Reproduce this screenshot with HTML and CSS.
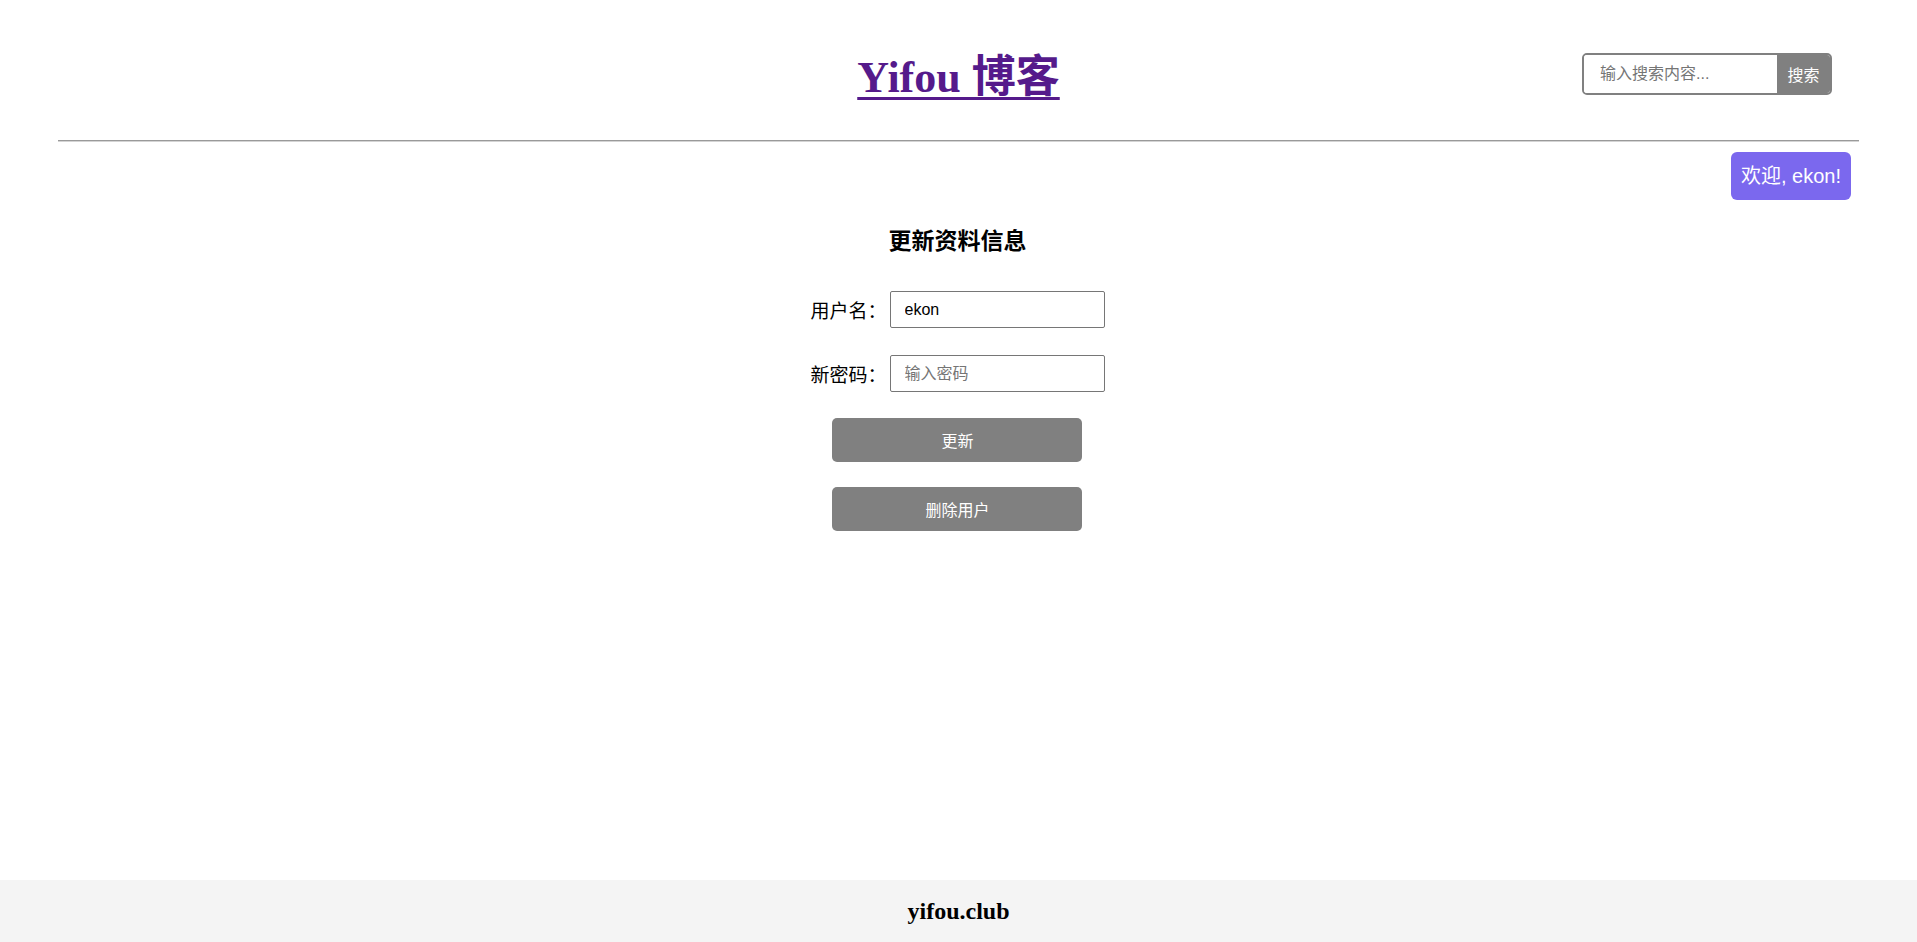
FILE: index.html
```html
<!DOCTYPE html>
<html lang="zh-CN">
<head>
<meta charset="utf-8">
<title>Yifou 博客</title>
<link rel="stylesheet" href="styles.css">
</head>
<body>
<div class="page">
  <header class="header">
    <div class="header-side"></div>
    <h1 class="site-title"><a href="#">Yifou 博客</a></h1>
    <div class="header-side header-right">
      <form class="search">
        <input class="search-input" type="text" placeholder="输入搜索内容...">
        <button class="search-btn" type="button">搜索</button>
      </form>
    </div>
  </header>
  <hr class="divider">
  <div class="welcome-row">
    <span class="welcome">欢迎, ekon!</span>
  </div>
  <main class="main">
    <h2 class="form-title">更新资料信息</h2>
    <form class="profile-form">
      <div class="field">
        <label class="field-label">用户名：</label>
        <input class="field-input" type="text" value="ekon">
      </div>
      <div class="field">
        <label class="field-label">新密码：</label>
        <input class="field-input" type="password" placeholder="输入密码">
      </div>
      <button class="btn" type="button">更新</button>
      <button class="btn" type="button">删除用户</button>
    </form>
  </main>
  <footer class="footer">yifou.club</footer>
</div>
</body>
</html>
```
FILE: styles.css
```css
* { box-sizing: border-box; }
html, body { margin: 0; padding: 0; }
body {
  font-family: "Liberation Sans", "Noto Sans CJK SC", sans-serif;
  color: #000;
  background: #fff;
}
.page {
  min-height: 100vh;
  display: flex;
  flex-direction: column;
}
.header {
  display: grid;
  grid-template-columns: 1fr auto 1fr;
  align-items: start;
  padding-top: 53px;
}
.site-title {
  margin: 1px 0 0;
  font-family: "Liberation Serif", "Noto Sans CJK SC", serif;
  font-weight: bold;
  font-size: 44px;
  line-height: 48px;
}
.site-title a {
  color: #551a8b;
  text-decoration: underline;
  text-decoration-thickness: 3px;
  text-underline-offset: 5px;
}
.header-right {
  display: flex;
  justify-content: flex-end;
  padding-right: 85px;
}
.search {
  display: flex;
  width: 250px;
  height: 42px;
  border: 2px solid #808080;
  border-radius: 5px;
  overflow: hidden;
  margin: 0;
}
.search-input {
  flex: 1;
  min-width: 0;
  border: none;
  outline: none;
  padding: 0 0 0 16px;
  font-family: "Liberation Sans", "Noto Sans CJK SC", sans-serif;
  font-size: 16px;
  color: #000;
}
.search-input::placeholder { color: #757575; }
.search-btn {
  width: 53px;
  border: none;
  background: #808080;
  color: #fff;
  font-family: "Liberation Sans", "Noto Sans CJK SC", sans-serif;
  font-size: 16px;
  padding: 0;
}
.divider {
  width: 94%;
  margin: 38px auto 0;
  height: 0;
  border: none;
  border-top: 1px solid #9a9a9a;
  border-bottom: 1px solid #d4d4d4;
}
.welcome-row {
  display: flex;
  justify-content: flex-end;
  padding-right: 66px;
  margin-top: 10px;
}
.welcome {
  background: #7b68ee;
  color: #fff;
  font-size: 20px;
  line-height: 28px;
  padding: 10px 10px;
  border-radius: 6px;
}
.main {
  display: flex;
  flex-direction: column;
  align-items: center;
  padding-right: 2px;
}
.form-title {
  margin: 25px 0 0;
  font-size: 23px;
  line-height: 32px;
  font-weight: bold;
}
.profile-form {
  display: flex;
  flex-direction: column;
  align-items: center;
  margin-top: 34px;
}
.field {
  display: flex;
  align-items: center;
  margin-bottom: 27px;
}
.field + .field { margin-bottom: 26px; }
.field-label {
  font-size: 19px;
  margin-right: 3px;
}
.field-input {
  width: 215px;
  height: 37px;
  border: 1px solid #767676;
  border-radius: 2px;
  padding: 0 0 0 14px;
  font-family: "Liberation Sans", "Noto Sans CJK SC", sans-serif;
  font-size: 16px;
  color: #000;
}
.field-input::placeholder { color: #757575; }
.btn {
  width: 250px;
  height: 44px;
  border: none;
  border-radius: 5px;
  background: #808080;
  color: #fff;
  font-family: "Liberation Sans", "Noto Sans CJK SC", sans-serif;
  font-size: 16px;
  margin-bottom: 25px;
}
.footer {
  margin-top: auto;
  background: #f4f4f4;
  text-align: center;
  font-family: "Liberation Serif", serif;
  font-weight: bold;
  font-size: 24px;
  line-height: 26px;
  padding: 18px 0;
}
```
